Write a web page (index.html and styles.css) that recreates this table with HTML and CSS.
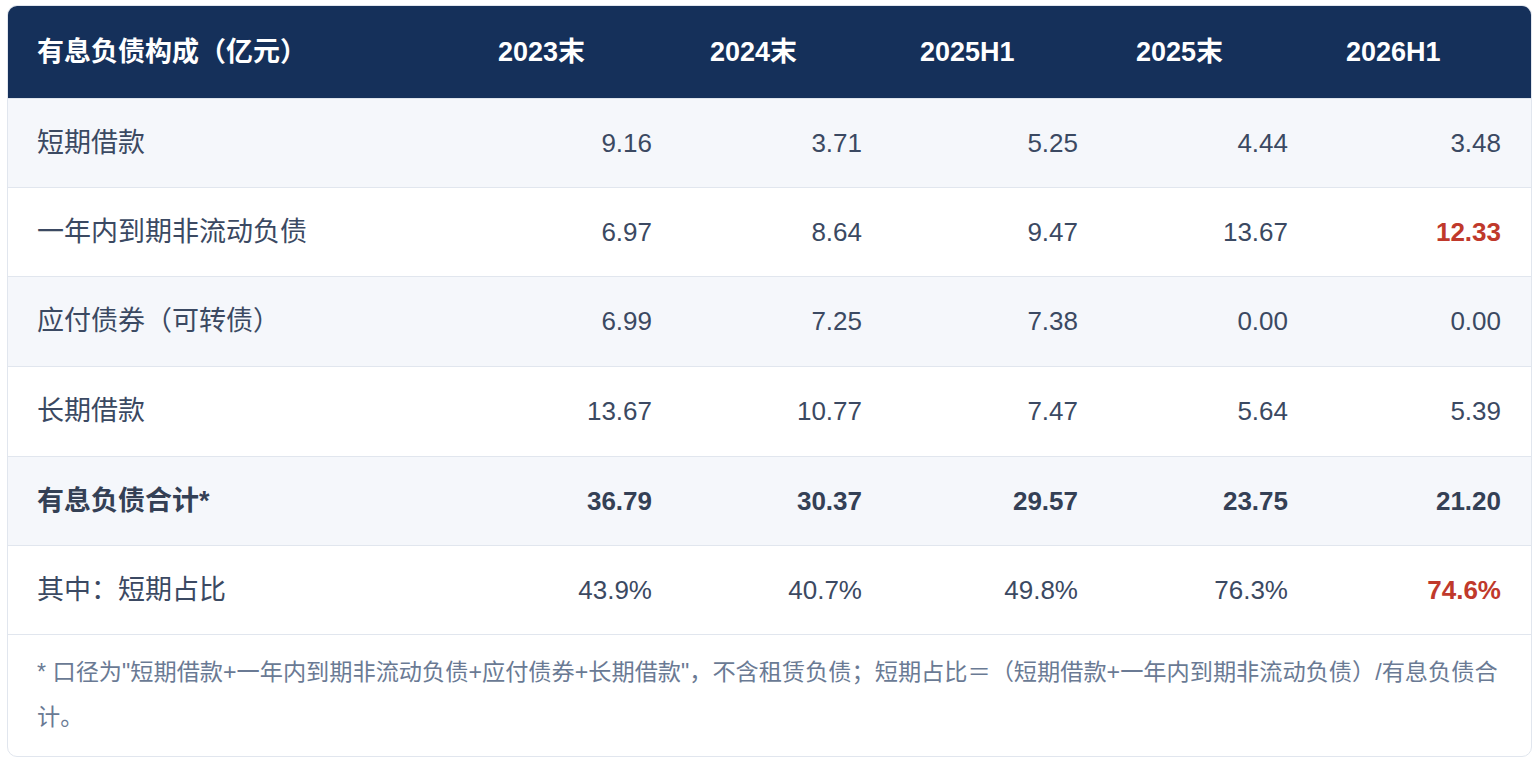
FILE: index.html
```html
<!DOCTYPE html>
<html lang="zh-CN">
<head>
<meta charset="utf-8">
<title>有息负债构成</title>
<link rel="stylesheet" href="styles.css">
</head>
<body>
<div class="card">
  <table class="debt">
    <colgroup>
      <col class="c-label">
      <col class="c-a">
      <col class="c-b">
      <col class="c-c">
      <col class="c-d">
      <col class="c-e">
    </colgroup>
    <thead>
      <tr>
        <th class="label">有息负债构成（亿元）</th>
        <th>2023末</th>
        <th>2024末</th>
        <th>2025H1</th>
        <th>2025末</th>
        <th>2026H1</th>
      </tr>
    </thead>
    <tbody>
      <tr class="alt">
        <td class="label">短期借款</td>
        <td>9.16</td><td>3.71</td><td>5.25</td><td>4.44</td><td>3.48</td>
      </tr>
      <tr>
        <td class="label">一年内到期非流动负债</td>
        <td>6.97</td><td>8.64</td><td>9.47</td><td>13.67</td><td class="warn">12.33</td>
      </tr>
      <tr class="alt tall">
        <td class="label">应付债券（可转债）</td>
        <td>6.99</td><td>7.25</td><td>7.38</td><td>0.00</td><td>0.00</td>
      </tr>
      <tr class="tall">
        <td class="label">长期借款</td>
        <td>13.67</td><td>10.77</td><td>7.47</td><td>5.64</td><td>5.39</td>
      </tr>
      <tr class="alt total">
        <td class="label">有息负债合计*</td>
        <td>36.79</td><td>30.37</td><td>29.57</td><td>23.75</td><td>21.20</td>
      </tr>
      <tr>
        <td class="label">其中：短期占比</td>
        <td>43.9%</td><td>40.7%</td><td>49.8%</td><td>76.3%</td><td class="warn">74.6%</td>
      </tr>
    </tbody>
  </table>
  <p class="note">* 口径为"短期借款+一年内到期非流动负债+应付债券+长期借款"，不含租赁负债；短期占比＝（短期借款+一年内到期非流动负债）/有息负债合计。</p>
</div>
</body>
</html>
```

FILE: styles.css
```css
html, body {
  margin: 0;
  padding: 0;
  background: #ffffff;
}

body {
  font-family: "Liberation Sans", "Noto Sans CJK SC", sans-serif;
  color: #3b4962;
  padding: 5px 6px 0 7px;
}

.card {
  width: 1523px;
  border: 1px solid #e1e6ee;
  border-radius: 10px;
  overflow: hidden;
  background: #ffffff;
}

.debt {
  width: 1523px;
  border-collapse: collapse;
  table-layout: fixed;
}

.c-label { width: 462px; }
.c-a { width: 212px; }
.c-b { width: 210px; }
.c-c { width: 216px; }
.c-d { width: 210px; }
.c-e { width: 213px; }

.debt th {
  background: #15305a;
  color: #ffffff;
  font-size: 27px;
  font-weight: 700;
  text-align: left;
  line-height: 40px;
  padding: 26px 28px 26px 28px;
  border-bottom: 1px solid #dfe4ec;
}

.debt th.label {
  padding-left: 29px;
}

.debt td {
  font-size: 26px;
  line-height: 40px;
  padding: 24px 30px 24px 30px;
  text-align: right;
  border-bottom: 1px solid #e1e6ee;
}

.debt tr.tall td {
  padding-bottom: 25px;
}

.debt td.label {
  font-size: 27px;
  text-align: left;
  padding-left: 29px;
}

.debt tr.alt td {
  background: #f5f7fb;
}

.debt tr.total td {
  font-weight: 700;
  color: #344055;
}

.debt td.warn {
  color: #c0392b;
  font-weight: 700;
}

.note {
  margin: 0;
  padding: 15px 26px 16px 29px;
  font-size: 23.2px;
  line-height: 45px;
  color: #6a7a94;
}
```
